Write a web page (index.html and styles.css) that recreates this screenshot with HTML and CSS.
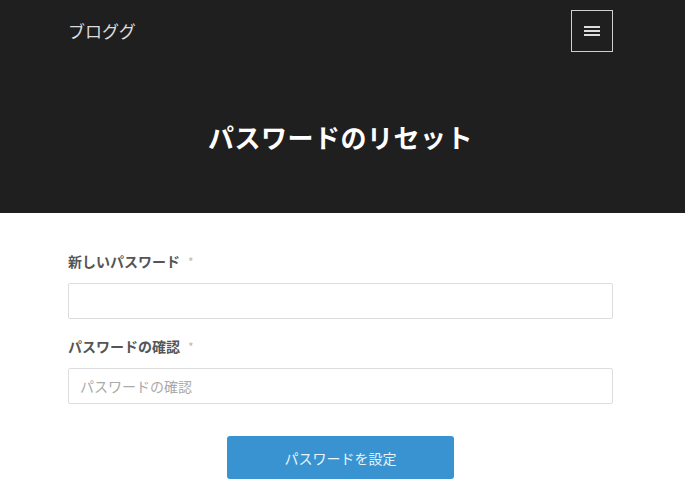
FILE: index.html
```html
<!DOCTYPE html>
<html lang="ja">
<head>
<meta charset="utf-8">
<link rel="stylesheet" href="styles.css">
</head>
<body>
<header class="hero">
  <div class="topbar">
    <div class="logo">ブロググ</div>
    <button class="menu" aria-label="menu">
      <svg width="16" height="12" viewBox="0 0 16 12"><rect x="0" y="1" width="16" height="2" fill="#ddd"/><rect x="0" y="5" width="16" height="2" fill="#ddd"/><rect x="0" y="9" width="16" height="2" fill="#ddd"/></svg>
    </button>
  </div>
  <h1 class="title">パスワードのリセット</h1>
</header>
<main class="content">
  <form class="form">
    <label class="label">新しいパスワード<span class="req">*</span></label>
    <input class="field" type="password">
    <label class="label">パスワードの確認<span class="req">*</span></label>
    <input class="field" type="password" placeholder="パスワードの確認">
    <div class="actions"><button class="submit" type="button">パスワードを設定</button></div>
  </form>
</main>
</body>
</html>
```
FILE: styles.css
```css
html, body { margin: 0; padding: 0; background: #fff; }
body { font-family: "Noto Sans CJK JP", "Noto Sans", sans-serif; }
.hero { background: #1f1f1f; height: 213px; box-sizing: border-box; padding: 10px 72px 0 68px; }
.topbar { display: flex; justify-content: space-between; align-items: flex-start; }
.logo { color: #dcdcdc; font-size: 17px; line-height: 20px; margin-top: 11px; }
.menu { width: 42px; height: 42px; border: 1px solid #cfcfcf; background: transparent; display: flex; align-items: center; justify-content: center; padding: 0; margin: 0; }
.title { margin: 60px 0 0; text-align: center; color: #fff; font-size: 26px; font-weight: 700; line-height: 50px; letter-spacing: 0.5px; }
.content { padding: 0 72px 0 68px; }
.form { display: flex; flex-direction: column; padding-top: 38px; }
.label { font-size: 14px; font-weight: 700; color: #555; line-height: 20px; }
.req { color: #bbb; font-weight: 400; margin-left: 8px; font-size: 12px; }
.field { margin: 11px 0 17px; height: 36px; box-sizing: border-box; border: 1px solid #ddd; border-radius: 2px; padding: 0 11px; font-family: inherit; font-size: 14px; color: #555; }
.field::placeholder { color: #aaa; }
.actions { display: flex; justify-content: center; margin-top: 15px; }
.submit { width: 227px; height: 43px; background: #3893d0; color: #eaf3fa; border: none; border-radius: 3px; font-family: inherit; font-size: 14px; }
```
